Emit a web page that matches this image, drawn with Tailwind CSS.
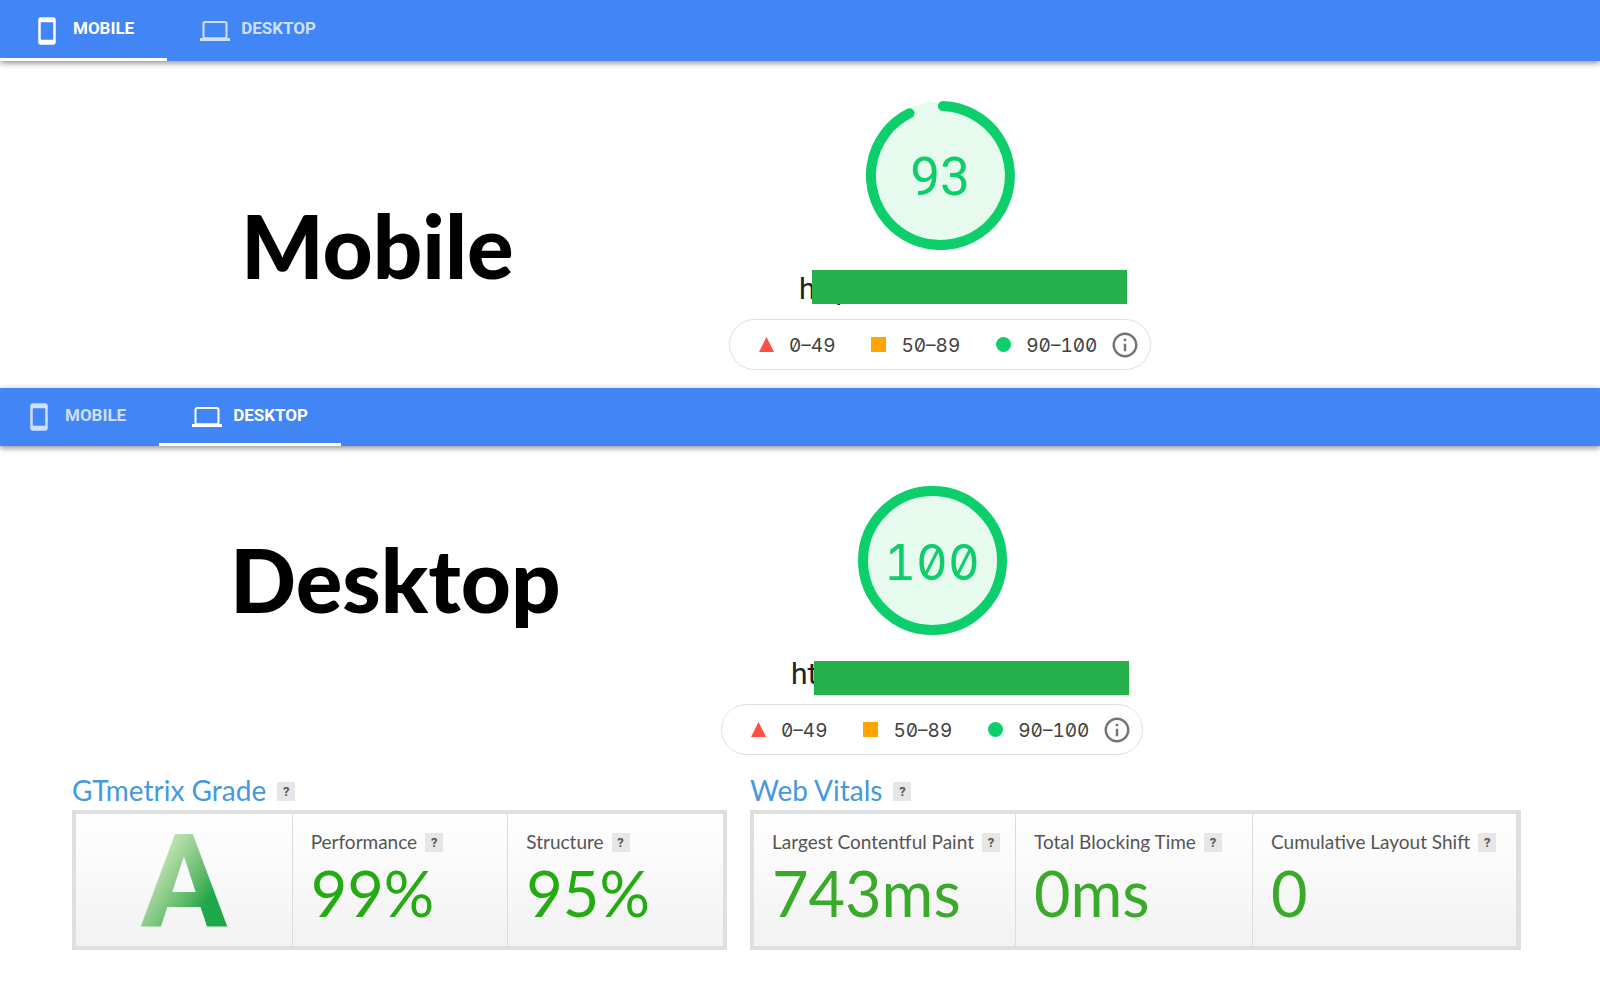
<!DOCTYPE html>
<html lang="en">
<head>
    <meta charset="UTF-8">
    <meta name="viewport" content="width=device-width, initial-scale=1.0">
    <title>PageSpeed and GTmetrix Results</title>
    <script src="https://cdn.jsdelivr.net/npm/@tailwindcss/browser@4"></script>
</head>
<body class="bg-white min-h-screen font-['Roboto',sans-serif]">
    <svg class="hidden">
        <symbol id="phone" viewBox="0 0 24 24">
            <path fill="currentColor" d="M17 1H7c-1.1 0-2 .9-2 2v18c0 1.1.9 2 2 2h10c1.1 0 2-.9 2-2V3c0-1.1-.9-2-2-2zm0 18H7V5h10v14z"/>
        </symbol>
        <symbol id="laptop" viewBox="0 0 24 24">
            <rect x="2.8" y="4.8" width="18.4" height="13" rx="1.4" fill="none" stroke="currentColor" stroke-width="1.6"/>
            <path fill="currentColor" d="M0 17.6h24V20H0z"/>
        </symbol>
        <symbol id="info" viewBox="0 0 24 24">
            <path fill="currentColor" d="M11 17h2v-6h-2v6zm1-15C6.48 2 2 6.48 2 12s4.48 10 10 10 10-4.48 10-10S17.52 2 12 2zm0 18c-4.41 0-8-3.59-8-8s3.59-8 8-8 8 3.59 8 8-3.59 8-8 8zM11 9h2V7h-2v2z"/>
        </symbol>
    </svg>

    <!-- Mobile result -->
    <section>
        <nav class="flex h-[61px] bg-[#4285f4] text-[17px] font-bold text-white shadow-[0_2px_6px_rgba(0,0,0,0.45)]">
            <button class="flex items-center gap-[11px] border-b-3 border-white pl-8 pr-[33px]">
                <svg class="mt-1 size-[30px]"><use href="#phone"/></svg>MOBILE
            </button>
            <button class="flex items-center gap-[11px] border-b-3 border-transparent px-[33px] text-[#cfe0fc]">
                <svg class="mt-1 size-[30px]"><use href="#laptop"/></svg>DESKTOP
            </button>
        </nav>
        <div class="grid grid-cols-[720fr_440fr_440fr] pt-10 pb-[18px]">
            <h2 class="pt-[95px] pl-[241px] font-['Lato',sans-serif] text-[87px] leading-[100px] font-black text-black">Mobile</h2>
            <div class="flex flex-col items-center">
                <div class="relative flex size-[149px] items-center justify-center">
                    <svg class="absolute inset-0" viewBox="0 0 149 149">
                        <circle cx="74.5" cy="74.5" r="74" fill="#e6faee"/>
                        <path d="M77 5.1A69.5 69.5 0 1 1 43.5 12.3" fill="none" stroke="#0cce6b" stroke-width="10" stroke-linecap="round"/>
                    </svg>
                    <span class="relative pt-1 text-[53px] text-[#0cce6b]">93</span>
                </div>
                <div class="relative mt-5 h-[34px] w-full pl-[79px] text-[30px] leading-[38px] text-[#212121]">https://
                    <div class="absolute top-0 left-[92px] h-[34px] w-[315px] bg-[#25b04c]"></div>
                </div>
                <div class="mt-[15px] flex h-[51px] w-[422px] items-center rounded-full border border-[#e0e0e0] pl-[29px] font-['Inter',sans-serif] text-[19px] text-[#424242] slashed-zero tabular-nums">
                    <svg class="mr-[15px] size-[15px]" viewBox="0 0 15 15"><path d="M7.5 0L15 15H0z" fill="#ff4e42"/></svg><span class="pt-[3px]">0–49</span>
                    <span class="mr-[15px] ml-[36px] size-[15px] bg-[#ffa400]"></span><span class="pt-[3px]">50–89</span>
                    <span class="mr-[15px] ml-[36px] size-[15px] rounded-full bg-[#0cce6b]"></span><span class="pt-[3px]">90–100</span>
                    <button class="ml-auto mr-[10px] text-[#757575]" aria-label="Score scale"><svg class="size-[30px]"><use href="#info"/></svg></button>
                </div>
            </div>
        </div>
    </section>

    <!-- Desktop result -->
    <section>
        <nav class="flex h-[58px] bg-[#4285f4] text-[17px] font-bold text-white shadow-[0_2px_6px_rgba(0,0,0,0.45)]">
            <button class="flex items-center gap-[11px] border-b-3 border-transparent pl-6 pr-[33px] text-[#cfe0fc]">
                <svg class="mt-[2px] size-[30px]"><use href="#phone"/></svg>MOBILE
            </button>
            <button class="flex items-center gap-[11px] border-b-3 border-white px-[33px]">
                <svg class="mt-[2px] size-[30px]"><use href="#laptop"/></svg>DESKTOP
            </button>
        </nav>
        <div class="grid grid-cols-[712fr_440fr_448fr] pt-10 pb-[18px]">
            <h2 class="pt-[44px] pl-[230px] font-['Lato',sans-serif] text-[87px] leading-[100px] font-black text-black">Desktop</h2>
            <div class="flex flex-col items-center">
                <div class="relative flex size-[149px] items-center justify-center">
                    <svg class="absolute inset-0" viewBox="0 0 149 149">
                        <circle cx="74.5" cy="74.5" r="69.5" fill="#e6faee" stroke="#0cce6b" stroke-width="10"/>
                    </svg>
                    <span class="relative pt-1 font-['Inter',sans-serif] text-[49px] text-[#0cce6b] slashed-zero tabular-nums">100</span>
                </div>
                <div class="relative mt-5 h-[34px] w-full pl-[79px] text-[30px] leading-[38px] text-[#212121]">https://
                    <div class="absolute top-[6px] left-[102px] h-[34px] w-[315px] bg-[#25b04c]"></div>
                </div>
                <div class="mt-[15px] flex h-[51px] w-[422px] items-center rounded-full border border-[#e0e0e0] pl-[29px] font-['Inter',sans-serif] text-[19px] text-[#424242] slashed-zero tabular-nums">
                    <svg class="mr-[15px] size-[15px]" viewBox="0 0 15 15"><path d="M7.5 0L15 15H0z" fill="#ff4e42"/></svg><span class="pt-[3px]">0–49</span>
                    <span class="mr-[15px] ml-[36px] size-[15px] bg-[#ffa400]"></span><span class="pt-[3px]">50–89</span>
                    <span class="mr-[15px] ml-[36px] size-[15px] rounded-full bg-[#0cce6b]"></span><span class="pt-[3px]">90–100</span>
                    <button class="ml-auto mr-[10px] text-[#757575]" aria-label="Score scale"><svg class="size-[30px]"><use href="#info"/></svg></button>
                </div>
            </div>
        </div>
    </section>

    <!-- GTmetrix summary -->
    <section class="grid grid-cols-[655fr_771fr] gap-[23px] pl-[72px] pr-[79px] font-['Lato',sans-serif]">
        <div>
            <h3 class="flex h-[37px] items-center gap-[11px] text-[28px] text-[#4499dc]"><span class="pb-1">GTmetrix Grade</span>
                <button class="h-[19px] w-[18px] bg-[#e6e6e6] font-['Roboto',sans-serif] text-[13px] leading-[19px] font-bold text-[#555]">?</button>
            </h3>
            <div class="grid h-[140px] grid-cols-3 border-4 border-[#dfdfdf] bg-linear-to-b from-white to-[#f2f2f2]">
                <div class="flex items-center justify-center">
                    <span class="bg-linear-to-br from-[#b9e0ad] from-30% to-[#1fa84a] to-70% bg-clip-text pt-1 font-['Roboto',sans-serif] text-[130px] leading-[130px] font-bold text-transparent">A</span>
                </div>
                <div class="border-l border-[#dcdcdc] pt-4 pl-[18px]">
                    <h4 class="flex items-center gap-2 text-[19px] leading-6 text-[#555]">Performance
                        <button class="h-[19px] w-[18px] bg-[#e6e6e6] font-['Roboto',sans-serif] text-[13px] leading-[19px] font-bold text-[#555]">?</button>
                    </h4>
                    <p class="text-[63px] leading-[78px] text-[#25ab12]">99%</p>
                </div>
                <div class="border-l border-[#dcdcdc] pt-4 pl-[18px]">
                    <h4 class="flex items-center gap-2 text-[19px] leading-6 text-[#555]">Structure
                        <button class="h-[19px] w-[18px] bg-[#e6e6e6] font-['Roboto',sans-serif] text-[13px] leading-[19px] font-bold text-[#555]">?</button>
                    </h4>
                    <p class="text-[63px] leading-[78px] text-[#25ab12]">95%</p>
                </div>
            </div>
        </div>
        <div>
            <h3 class="flex h-[37px] items-center gap-[11px] text-[28px] text-[#4499dc]"><span class="pb-1">Web Vitals</span>
                <button class="h-[19px] w-[18px] bg-[#e6e6e6] font-['Roboto',sans-serif] text-[13px] leading-[19px] font-bold text-[#555]">?</button>
            </h3>
            <div class="grid h-[140px] grid-cols-[261fr_237fr_265fr] border-4 border-[#dfdfdf] bg-linear-to-b from-white to-[#f2f2f2]">
                <div class="pt-4 pl-[18px]">
                    <h4 class="flex items-center gap-2 text-[19px] leading-6 text-[#555]">Largest Contentful Paint
                        <button class="h-[19px] w-[18px] bg-[#e6e6e6] font-['Roboto',sans-serif] text-[13px] leading-[19px] font-bold text-[#555]">?</button>
                    </h4>
                    <p class="text-[63px] leading-[78px] text-[#3aaa2a]">743ms</p>
                </div>
                <div class="border-l border-[#dcdcdc] pt-4 pl-[18px]">
                    <h4 class="flex items-center gap-2 text-[19px] leading-6 text-[#555]">Total Blocking Time
                        <button class="h-[19px] w-[18px] bg-[#e6e6e6] font-['Roboto',sans-serif] text-[13px] leading-[19px] font-bold text-[#555]">?</button>
                    </h4>
                    <p class="text-[63px] leading-[78px] text-[#3aaa2a]">0ms</p>
                </div>
                <div class="border-x border-[#dcdcdc] pt-4 pl-[18px]">
                    <h4 class="flex items-center gap-2 text-[19px] leading-6 text-[#555]">Cumulative Layout Shift
                        <button class="h-[19px] w-[18px] bg-[#e6e6e6] font-['Roboto',sans-serif] text-[13px] leading-[19px] font-bold text-[#555]">?</button>
                    </h4>
                    <p class="text-[63px] leading-[78px] text-[#3aaa2a]">0</p>
                </div>
            </div>
        </div>
    </section>
</body>
</html>
